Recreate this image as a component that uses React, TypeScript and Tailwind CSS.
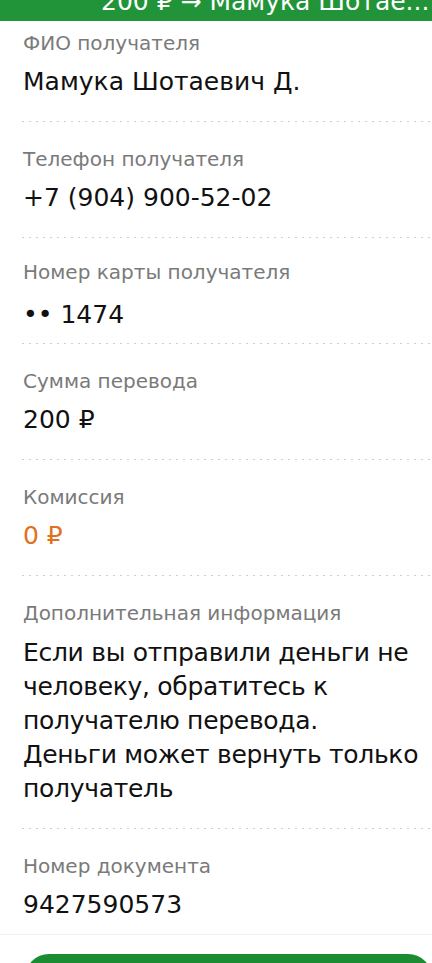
const rows = [
  { label: "ФИО получателя", value: ["Мамука Шотаевич Д."] },
  { label: "Телефон получателя", value: ["+7 (904) 900-52-02"] },
  { label: "Номер карты получателя", value: ["•• 1474"], card: true },
  { label: "Сумма перевода", value: ["200 ₽"] },
  { label: "Комиссия", value: ["0 ₽"], accent: true },
  {
    label: "Дополнительная информация",
    value: [
      "Если вы отправили деньги не",
      "человеку, обратитесь к",
      "получателю перевода.",
      "Деньги может вернуть только",
      "получатель",
    ],
    multi: true,
  },
  { label: "Номер документа", value: ["9427590573"], last: true },
];

function Dots() {
  return (
    <div className="ml-[22px] h-px bg-[repeating-linear-gradient(to_right,#cfcfcf_0_2px,transparent_2px_7px)]" />
  );
}

export default function App() {
  return (
    <div className="w-[432px] h-[963px] overflow-hidden bg-white font-['DejaVu_Sans',sans-serif]">
      <div className="h-[21px] bg-[#21943a] overflow-hidden">
        <div className="pl-[101px] -mt-[16px] text-[25px] leading-[36px] text-white whitespace-nowrap">
          200 ₽ → Мамука Шотае...
        </div>
      </div>

      {rows.map((row, i) => {
        const pad =
          i === 0
            ? "pt-[10px] pb-[23px]"
            : row.card
            ? "pt-[22px] pb-[12px]"
            : row.multi
            ? "pt-[25px] pb-[22px]"
            : row.last
            ? "pt-[25px] pb-[13px]"
            : "pt-[25px] pb-[23px]";
        return (
          <div key={i}>
            <div className={`pl-[23px] ${pad}`}>
              <div className="text-[20px] leading-[24px] text-[#7a7a7a]">{row.label}</div>
              <div
                className={`${row.card ? "mt-[15px]" : "mt-[11px]"} text-[25px] whitespace-nowrap ${
                  row.multi ? "leading-[34px] tracking-[-0.3px]" : "leading-[32px]"
                } ${row.accent ? "text-[#e2711d]" : "text-[#111]"}`}
              >
                {row.value.map((line, j) => (
                  <div key={j}>{line}</div>
                ))}
              </div>
            </div>
            {!row.last && <Dots />}
          </div>
        );
      })}

      <div className="h-px bg-[#f1f1f1]" />
      <div className="pt-[19px] pl-[25px]">
        <div className="h-[60px] rounded-[24px] bg-[#1b8c31]" />
      </div>
    </div>
  );
}
